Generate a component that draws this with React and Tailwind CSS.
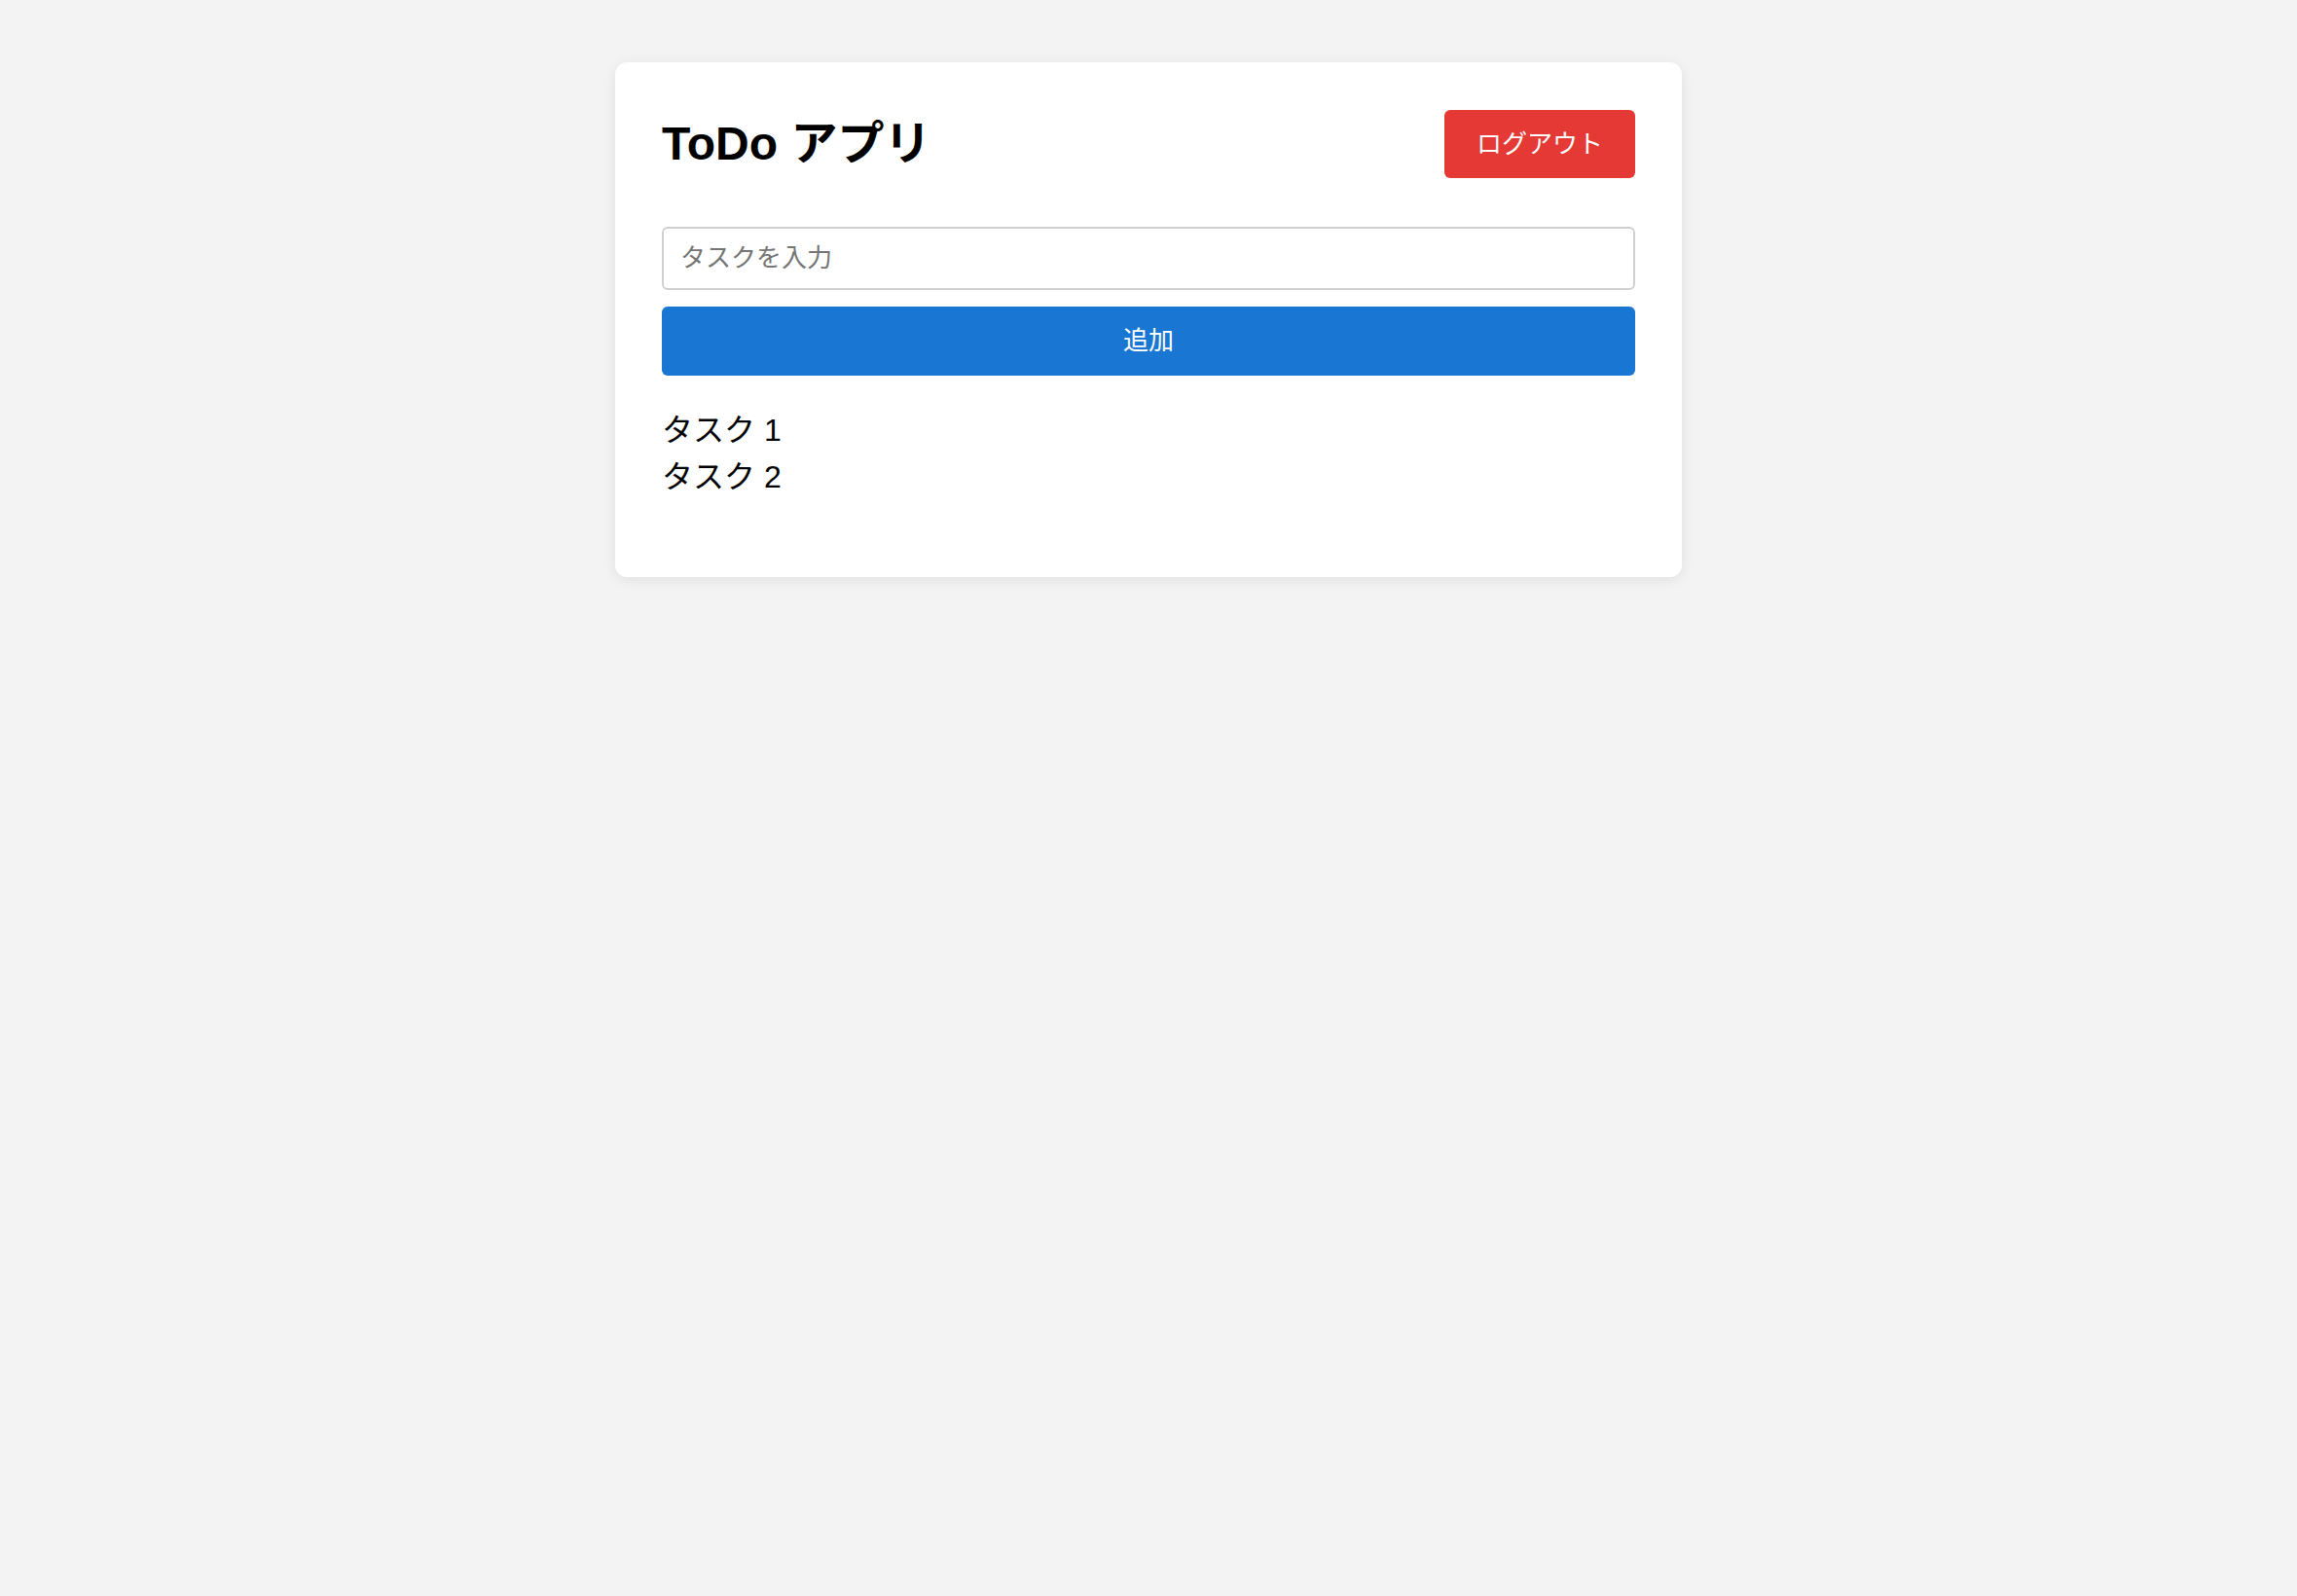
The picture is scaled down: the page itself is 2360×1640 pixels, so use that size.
import React, { useState } from 'react';

const FONT = '[font-family:"Liberation_Sans","Noto_Sans_CJK_JP",sans-serif]';

export default function App() {
    const [text, setText] = useState('');
    const [todos, setTodos] = useState(['タスク 1', 'タスク 2']);

    const add = () => {
        if (!text.trim()) return;
        setTodos([...todos, text.trim()]);
        setText('');
    };

    return (
        <div className={`min-h-[1640px] bg-[#f3f3f3] pt-[64px] ${FONT}`}>
            <div className="mx-auto w-[1096px] rounded-[12px] bg-white px-[48px] pt-[49px] pb-[48px] shadow-[0_3px_14px_rgba(0,0,0,0.08)]">

                {/* Header */}
                <div className="flex items-center justify-between">
                    <h1 className="text-[48px] font-bold leading-none text-black">ToDo アプリ</h1>
                    <button className="h-[70px] w-[196px] rounded-[6px] bg-[#e53935] text-[26px] text-white">
                        ログアウト
                    </button>
                </div>

                {/* Input */}
                <input
                    value={text}
                    onChange={(e) => setText(e.target.value)}
                    placeholder="タスクを入力"
                    className="mt-[50px] block h-[65px] w-full rounded-[6px] border-2 border-[#d0d0d0] px-[17px] text-[26px] placeholder:text-[#757575] outline-none"
                />
                <button
                    onClick={add}
                    className="mt-[17px] block h-[71px] w-full rounded-[6px] bg-[#1976d2] text-[26px] text-white"
                >
                    追加
                </button>

                {/* List */}
                <ul className="mt-[32px] mb-[31px] text-[32px] leading-[48px] text-black">
                    {todos.map((t, i) => (
                        <li key={i}>{t}</li>
                    ))}
                </ul>
            </div>
        </div>
    );
}
